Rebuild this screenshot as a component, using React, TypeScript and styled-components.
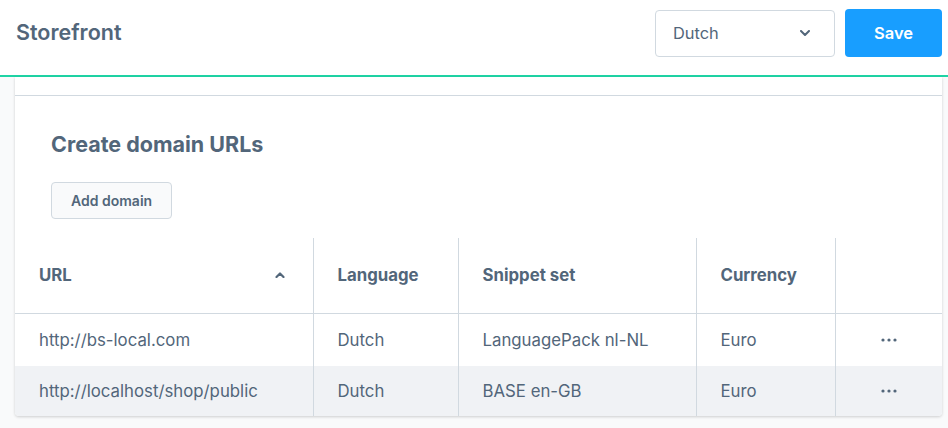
import styled, { createGlobalStyle } from "styled-components";

const GlobalStyle = createGlobalStyle`
  html, body {
    margin: 0;
    padding: 0;
    background: #f9fafb;
  }

  body {
    font-family: Inter, "Noto Sans", sans-serif;
    color: #52667a;
    -webkit-font-smoothing: antialiased;
  }
`;

const Page = styled.div`
  width: 948px;
  height: 428px;
  overflow: hidden;
  background: #f9fafb;
`;

const Header = styled.header`
  height: 75px;
  display: flex;
  align-items: flex-start;
  justify-content: space-between;
  padding: 0 6px 0 16px;
  background: #ffffff;
  border-bottom: 2px solid #1fd4a5;

  h1 {
    margin: 18px 0 0;
    font-size: 21.5px;
    line-height: 28px;
    font-weight: 600;
    color: #52667a;
  }
`;

const Actions = styled.div`
  display: flex;
  align-items: center;
  gap: 10px;
  margin-top: 9px;
`;

const Select = styled.div`
  width: 180px;
  height: 47px;
  box-sizing: border-box;
  display: flex;
  align-items: center;
  justify-content: space-between;
  padding: 0 24px 0 17px;
  border: 1px solid #d1d9e0;
  border-radius: 4px;
  background: #ffffff;
  font-size: 16.4px;
  color: #52667a;
`;

const SaveButton = styled.button`
  width: 97px;
  height: 48px;
  border: none;
  border-radius: 4px;
  background: #189eff;
  color: #ffffff;
  font-family: inherit;
  font-size: 16.5px;
  font-weight: 600;
  cursor: pointer;
`;

const Content = styled.main`
  padding: 0 6px 0 15px;
`;

const Card = styled.section`
  background: #ffffff;
  border-radius: 0 0 4px 4px;
  box-shadow: 0 1px 3px rgba(0, 0, 0, 0.18);
  overflow: hidden;
`;

const CardTop = styled.div`
  height: 18px;
  border-bottom: 1px solid #d1d9e0;
`;

const CardBody = styled.div`
  padding: 34px 36px 19px;

  h2 {
    margin: 0 0 24px;
    font-size: 21.5px;
    line-height: 28px;
    font-weight: 700;
    color: #52667a;
  }
`;

const GhostButton = styled.button`
  display: block;
  height: 37px;
  padding: 0 19px;
  border: 1px solid #d1d9e0;
  border-radius: 4px;
  background: #f9fafb;
  color: #52667a;
  font-family: inherit;
  font-size: 14px;
  font-weight: 600;
  cursor: pointer;
`;

const Grid = styled.table`
  width: 100%;
  border-collapse: collapse;
  table-layout: fixed;
  font-size: 16.8px;
`;

const HeadCell = styled.th<{ $w: number }>`
  box-sizing: border-box;
  width: ${(p) => p.$w}px;
  height: 75px;
  padding: 0 24px;
  text-align: left;
  font-size: 16.8px;
  font-weight: 700;
  color: #52667a;
  border-bottom: 1px solid #d1d9e0;

  & + & {
    border-left: 1px solid #d1d9e0;
  }
`;

const SortHead = styled.div`
  display: flex;
  align-items: center;
  justify-content: space-between;
  padding-right: 4px;
`;

const Row = styled.tr<{ $striped?: boolean }>`
  background: ${(p) => (p.$striped ? "#f0f2f5" : "#ffffff")};
  height: ${(p) => (p.$striped ? 50 : 53)}px;
`;

const Cell = styled.td<{ $center?: boolean }>`
  padding: 0 24px;
  font-weight: 400;
  color: #52667a;
  text-align: ${(p) => (p.$center ? "center" : "left")};
  white-space: nowrap;

  & + & {
    border-left: 1px solid #d1d9e0;
  }

  svg {
    display: block;
    margin: 0 auto;
  }
`;

const domains = [
  {
    url: "http://bs-local.com",
    language: "Dutch",
    snippet: "LanguagePack nl-NL",
    currency: "Euro",
  },
  {
    url: "http://localhost/shop/public",
    language: "Dutch",
    snippet: "BASE en-GB",
    currency: "Euro",
  },
];

const ChevronDown = () => (
  <svg width="10" height="6" viewBox="0 0 10 6">
    <path
      d="M1 1l4 4 4-4"
      fill="none"
      stroke="#52667a"
      strokeWidth="2"
      strokeLinecap="round"
      strokeLinejoin="round"
    />
  </svg>
);

const ChevronUp = () => (
  <svg width="10" height="6" viewBox="0 0 10 6">
    <path
      d="M1.5 5L5 1.5 8.5 5"
      fill="none"
      stroke="#52667a"
      strokeWidth="2.2"
      strokeLinecap="round"
      strokeLinejoin="round"
    />
  </svg>
);

const Dots = () => (
  <svg width="16" height="4" viewBox="0 0 16 4">
    <circle cx="2" cy="2" r="1.6" fill="#52667a" />
    <circle cx="8" cy="2" r="1.6" fill="#52667a" />
    <circle cx="14" cy="2" r="1.6" fill="#52667a" />
  </svg>
);

export default function App() {
  return (
    <>
      <GlobalStyle />
      <Page>
        <Header>
          <h1>Storefront</h1>
          <Actions>
            <Select>
              <span>Dutch</span>
              <ChevronDown />
            </Select>
            <SaveButton>Save</SaveButton>
          </Actions>
        </Header>

        <Content>
          <Card>
            <CardTop />
            <CardBody>
              <h2>Create domain URLs</h2>
              <GhostButton>Add domain</GhostButton>
            </CardBody>

            <Grid>
              <thead>
                <tr>
                  <HeadCell $w={298}>
                    <SortHead>
                      <span>URL</span>
                      <ChevronUp />
                    </SortHead>
                  </HeadCell>
                  <HeadCell $w={145}>Language</HeadCell>
                  <HeadCell $w={238}>Snippet set</HeadCell>
                  <HeadCell $w={139}>Currency</HeadCell>
                  <HeadCell $w={107}></HeadCell>
                </tr>
              </thead>
              <tbody>
                {domains.map((d, i) => (
                  <Row key={d.url} $striped={i % 2 === 1}>
                    <Cell>{d.url}</Cell>
                    <Cell>{d.language}</Cell>
                    <Cell>{d.snippet}</Cell>
                    <Cell>{d.currency}</Cell>
                    <Cell $center>
                      <Dots />
                    </Cell>
                  </Row>
                ))}
              </tbody>
            </Grid>
          </Card>
        </Content>
      </Page>
    </>
  );
}
